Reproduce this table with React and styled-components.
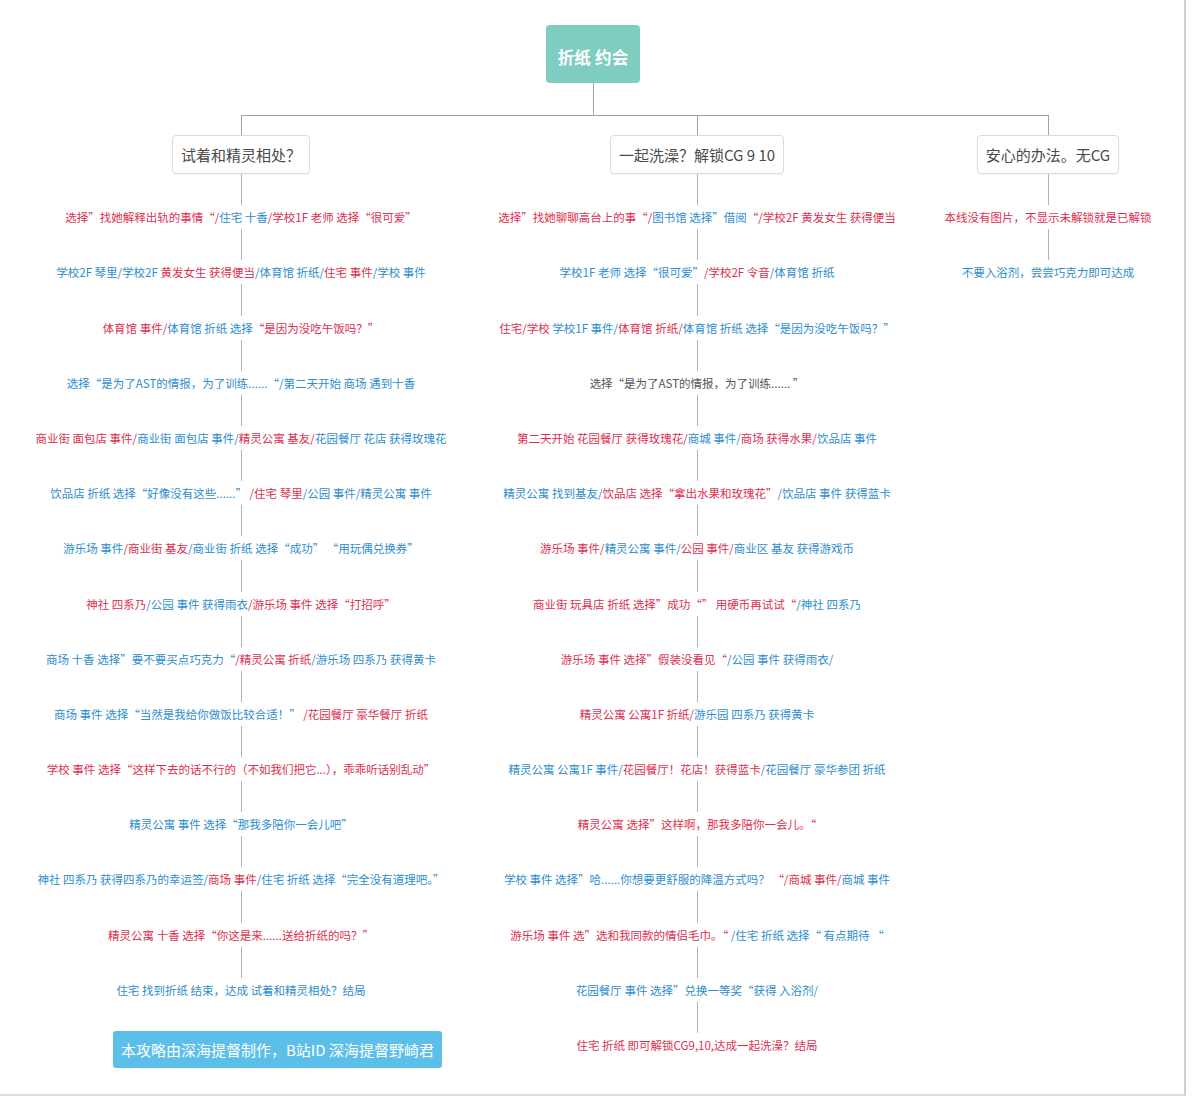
import React from 'react';
import styled, { createGlobalStyle } from 'styled-components';

const GlobalStyle = createGlobalStyle`
  body {
    margin: 0;
    background: #fff;
    font-family: "Noto Sans CJK SC", "Noto Sans", sans-serif;
  }
`;

const tones = {
  r: '#dc2f4f',
  b: '#2e8dcd',
  g: '#555555',
};

const Page = styled.div`
  box-sizing: border-box;
  width: 1186px;
  height: 1096px;
  padding-top: 25px;
  border-right: 2px solid #cfcfcf;
  border-bottom: 2px solid #dedede;
  display: flex;
  flex-direction: column;
`;

const RootRow = styled.div`
  display: flex;
  justify-content: center;
  padding-left: 2px;
`;

const RootNode = styled.div`
  box-sizing: border-box;
  width: 94px;
  height: 58px;
  padding-top: 6px;
  border-radius: 4px;
  background: #7fcdc0;
  color: #fff;
  font-size: 16.5px;
  font-weight: 700;
  display: flex;
  align-items: center;
  justify-content: center;
  letter-spacing: 0.2px;
`;

const RootStem = styled.div`
  align-self: center;
  margin-left: 2px;
  width: 1px;
  height: 32px;
  background: #a3a3a3;
`;

const Branches = styled.div`
  display: grid;
  grid-template-columns: 482px 430px 272px;
`;

const Branch = styled.div`
  display: flex;
  flex-direction: column;
  align-items: center;
`;

const Rail = styled.div`
  align-self: stretch;
  height: 1px;
  background: #a3a3a3;
  margin-left: ${(p) => (p.$side === 'first' ? '50%' : '0')};
  margin-right: ${(p) => (p.$side === 'last' ? 'calc(50% - 1px)' : '0')};
`;

const Stem = styled.div`
  width: 1px;
  height: ${(p) => p.$h}px;
  background: ${(p) => p.$c || '#b3b3b3'};
`;

const Topic = styled.div`
  box-sizing: border-box;
  height: 39px;
  padding: 0 8px;
  border: 1px solid #dcdcdc;
  border-radius: 4px;
  background: #fff;
  box-shadow: 0 1px 1px rgba(0, 0, 0, 0.04);
  color: #4a4a4a;
  font-size: 15px;
  display: flex;
  align-items: center;
  white-space: nowrap;
`;

const Step = styled.div`
  height: 24px;
  line-height: 24px;
  font-size: 11.5px;
  white-space: nowrap;
`;

const Part = styled.span`
  color: ${(p) => tones[p.$tone]};
`;

const Credit = styled.div`
  align-self: flex-start;
  margin: 29px 0 0 113px;
  height: 37px;
  padding: 0 8px;
  border-radius: 3px;
  background: #5cbfea;
  color: #fff;
  font-size: 15px;
  display: flex;
  align-items: center;
  white-space: nowrap;
`;

const left = [
  [['r', '选择”找她解释出轨的事情“/'], ['b', '住宅 十香'], ['r', '/学校1F 老师 选择“很可爱”']],
  [['b', '学校2F 琴里/学校2F '], ['r', '黄发女生 获得便当'], ['b', '/体育馆 折纸/'], ['r', '住宅 事件'], ['b', '/学校 事件']],
  [['r', '体育馆 事件/'], ['b', '体育馆 折纸 选择'], ['r', '“是因为没吃午饭吗？”']],
  [['b', '选择“是为了AST的情报，为了训练......“/第二天开始 商场 遇到十香']],
  [['r', '商业街 面包店 事件/'], ['b', '商业街 面包店 事件/'], ['r', '精灵公寓 基友/'], ['b', '花园餐厅 花店 获得玫瑰花']],
  [['b', '饮品店 折纸 选择“好像没有这些......” '], ['r', '/住宅 琴里'], ['b', '/公园 事件/精灵公寓 事件']],
  [['b', '游乐场 事件'], ['r', '/商业街 基友'], ['b', '/商业街 折纸 选择“成功” “用玩偶兑换券”']],
  [['r', '神社 四系乃'], ['b', '/公园 事件 获得雨衣'], ['r', '/游乐场 事件 选择“打招呼”']],
  [['b', '商场 十香 选择”要不要买点巧克力“'], ['r', '/精灵公寓 折纸'], ['b', '/游乐场 四系乃 获得黄卡']],
  [['b', '商场 事件 选择“当然是我给你做饭比较合适！” '], ['r', '/花园餐厅 豪华餐厅 折纸']],
  [['r', '学校 事件 选择“这样下去的话不行的（不如我们把它...），乖乖听话别乱动”']],
  [['b', '精灵公寓 事件 选择“那我多陪你一会儿吧”']],
  [['b', '神社 四系乃 获得四系乃的幸运签/'], ['r', '商场 事件'], ['b', '/住宅 折纸 选择“完全没有道理吧。”']],
  [['r', '精灵公寓 十香 选择“你这是来......送给折纸的吗？”']],
  [['b', '住宅 找到折纸 结束，达成 试着和精灵相处？结局']],
];

const middle = [
  [['r', '选择”找她聊聊高台上的事“/'], ['b', '图书馆 选择”借阅'], ['r', '“/学校2F 黄发女生 获得便当']],
  [['b', '学校1F 老师 选择“很可爱”'], ['r', '/学校2F 令音'], ['b', '/体育馆 折纸']],
  [['r', '住宅/学校 '], ['b', '学校1F 事件/'], ['r', '体育馆 折纸/'], ['b', '体育馆 折纸 选择“是因为没吃午饭吗？”']],
  [['g', '选择“是为了AST的情报，为了训练...... ”']],
  [['r', '第二天开始 花园餐厅 获得玫瑰花/'], ['b', '商城 事件/'], ['r', '商场 获得水果/'], ['b', '饮品店 事件']],
  [['b', '精灵公寓 找到基友/'], ['r', '饮品店 选择“拿出水果和玫瑰花”'], ['b', '/饮品店 事件 获得蓝卡']],
  [['r', '游乐场 事件/'], ['b', '精灵公寓 事件/'], ['r', '公园 事件/'], ['b', '商业区 基友 获得游戏币']],
  [['r', '商业街 玩具店 折纸 选择”成功“” 用硬币再试试“'], ['b', '/神社 四系乃']],
  [['r', '游乐场 事件 选择”假装没看见“'], ['b', '/公园 事件 获得雨衣/']],
  [['r', '精灵公寓 公寓1F 折纸/'], ['b', '游乐园 四系乃 获得黄卡']],
  [['b', '精灵公寓 公寓1F 事件/'], ['r', '花园餐厅！花店！获得蓝卡'], ['b', '/花园餐厅 豪华参团 折纸']],
  [['r', '精灵公寓 选择”这样啊，那我多陪你一会儿。“']],
  [['b', '学校 事件 选择”哈......你想要更舒服的降温方式吗？ '], ['r', '“/商城 事件/'], ['b', '商城 事件']],
  [['r', '游乐场 事件 选”选和我同款的情侣毛巾。“ '], ['b', '/住宅 折纸 选择“ 有点期待 “']],
  [['b', '花园餐厅 事件 选择”兑换一等奖“获得 入浴剂/']],
  [['r', '住宅 折纸  即可解锁CG9,10,达成一起洗澡？结局']],
];

const right = [
  [['r', '本线没有图片，不显示未解锁就是已解锁']],
  [['b', '不要入浴剂，尝尝巧克力即可达成']],
];

const Steps = ({ items }) =>
  items.map((parts, i) => (
    <React.Fragment key={i}>
      <Stem $h={31.2} />
      <Step>
        {parts.map(([tone, text], j) => (
          <Part key={j} $tone={tone}>
            {text}
          </Part>
        ))}
      </Step>
    </React.Fragment>
  ));

const App = () => (
  <>
    <GlobalStyle />
    <Page lang="zh-CN">
      <RootRow>
        <RootNode>折纸 约会</RootNode>
      </RootRow>
      <RootStem />
      <Branches>
        <Branch>
          <Rail $side="first" />
          <Stem $h={19} $c="#a3a3a3" />
          <Topic>试着和精灵相处？</Topic>
          <Steps items={left} />
          <Credit>本攻略由深海提督制作，B站ID 深海提督野崎君</Credit>
        </Branch>
        <Branch>
          <Rail $side="mid" />
          <Stem $h={19} $c="#a3a3a3" />
          <Topic>一起洗澡？解锁CG 9 10</Topic>
          <Steps items={middle} />
        </Branch>
        <Branch>
          <Rail $side="last" />
          <Stem $h={19} $c="#a3a3a3" />
          <Topic>安心的办法。无CG</Topic>
          <Steps items={right} />
        </Branch>
      </Branches>
    </Page>
  </>
);

export default App;
